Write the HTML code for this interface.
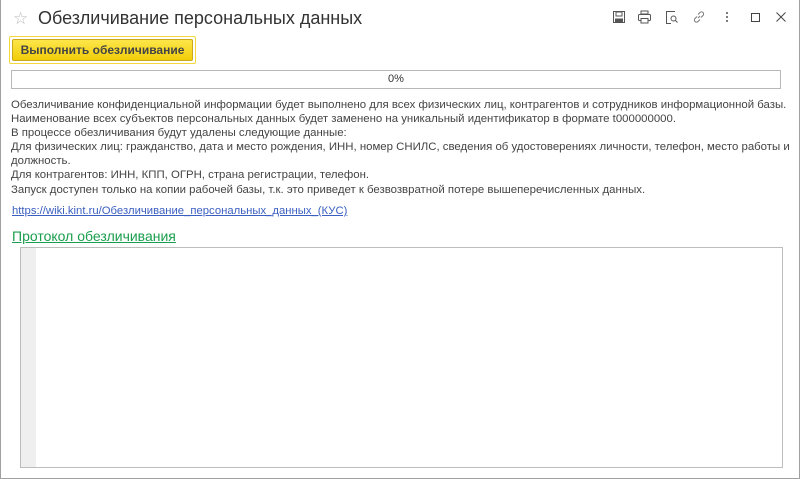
<!DOCTYPE html>
<html><head><meta charset="utf-8"><style>
*{margin:0;padding:0;box-sizing:border-box}
body{width:800px;height:479px;background:#fff;font-family:"Liberation Sans",sans-serif;overflow:hidden;position:relative}
.win{position:absolute;left:0;top:0;width:800px;height:479px;border:1px solid #a0a0a0;border-top:none}
.title{position:absolute;left:38px;top:8px;font-size:18px;color:#333}
.star{position:absolute;left:13px;top:9px;font-size:17px;color:#bbb}
.btnwrap{position:absolute;left:9px;top:36px;width:187px;height:28px;border:1px solid #f4d83a;border-radius:2px}
.btn{position:absolute;left:2px;top:2px;width:181px;height:22px;background:linear-gradient(#fde64a,#f1cd08);border:1px solid #c9ab1a;border-radius:2px;font-size:12px;font-weight:bold;color:#444;text-align:center;line-height:20px}
.prog{position:absolute;left:11px;top:70px;width:770px;height:19px;border:1px solid #b8b8b8;font-size:11px;text-align:center;line-height:17px;color:#333}
.txt{position:absolute;left:11px;top:98px;font-size:11.4px;line-height:14.1px;color:#444;width:785px}
.link{position:absolute;left:12px;top:205px;font-size:11.3px;color:#3b5fc0;text-decoration:underline}
.proto{position:absolute;left:12px;top:228px;font-size:14px;color:#1a9e4d;text-decoration:underline}
.area{position:absolute;left:20px;top:247px;width:763px;height:221px;border:1px solid #bdbdbd;background:#fff}
.gut{position:absolute;left:0;top:0;width:15px;height:100%;background:#efefef}
.ic{position:absolute;top:10px}
</style></head><body>
<div class="win"></div>
<div class="star">☆</div>
<div class="title">Обезличивание персональных данных</div>
<svg class="ic" style="left:612px" width="14" height="14" viewBox="0 0 14 14" fill="none" stroke="#555"><rect x="1.5" y="1.5" width="11" height="11"/><rect x="4" y="2" width="6" height="4"/><rect x="3.5" y="9" width="7" height="3.5" fill="#555"/></svg>
<svg class="ic" style="left:637px" width="15" height="14" viewBox="0 0 15 14" fill="none" stroke="#555"><rect x="4" y="1" width="7" height="3"/><rect x="1.5" y="4.5" width="12" height="6" rx="1"/><rect x="4" y="8.5" width="7" height="4.5" fill="#fff"/></svg>
<svg class="ic" style="left:665px" width="14" height="15" viewBox="0 0 14 15" fill="none" stroke="#555"><path d="M10 1.5H1.5v12H6"/><circle cx="8.5" cy="8.5" r="2.5"/><path d="M10.3 10.3L12.5 12.5"/></svg>
<svg class="ic" style="left:692px" width="14" height="14" viewBox="0 0 14 14" fill="none" stroke="#777"><path d="M6 8l2-2M5 6.5L3 8.5a2 2 0 003 3l2-2M9 7.5l2-2a2 2 0 00-3-3l-2 2"/></svg>
<svg class="ic" style="left:725px" width="4" height="14" viewBox="0 0 4 14" fill="#555"><circle cx="2" cy="3" r="1"/><circle cx="2" cy="7" r="1"/><circle cx="2" cy="11" r="1"/></svg>
<svg class="ic" style="left:750px" width="12" height="14" viewBox="0 0 12 14" fill="none" stroke="#444"><rect x="1.5" y="3.5" width="8" height="8"/></svg>
<svg class="ic" style="left:775px" width="12" height="14" viewBox="0 0 12 14" fill="none" stroke="#444"><path d="M1.5 2.5l9 9M10.5 2.5l-9 9"/></svg>
<div class="btnwrap"><div class="btn">Выполнить обезличивание</div></div>
<div class="prog">0%</div>
<div class="txt">Обезличивание конфиденциальной информации будет выполнено для всех физических лиц, контрагентов и сотрудников информационной базы.<br>Наименование всех субъектов персональных данных будет заменено на уникальный идентификатор в формате t000000000.<br>В процессе обезличивания будут удалены следующие данные:<br>Для физических лиц: гражданство, дата и место рождения, ИНН, номер СНИЛС, сведения об удостоверениях личности, телефон, место работы и должность.<br>Для контрагентов: ИНН, КПП, ОГРН, страна регистрации, телефон.<br>Запуск доступен только на копии рабочей базы, т.к. это приведет к безвозвратной потере вышеперечисленных данных.</div>
<div class="link">https://wiki.kint.ru/Обезличивание_персональных_данных_(КУС)</div>
<div class="proto">Протокол обезличивания</div>
<div class="area"><div class="gut"></div></div>
</body></html>
